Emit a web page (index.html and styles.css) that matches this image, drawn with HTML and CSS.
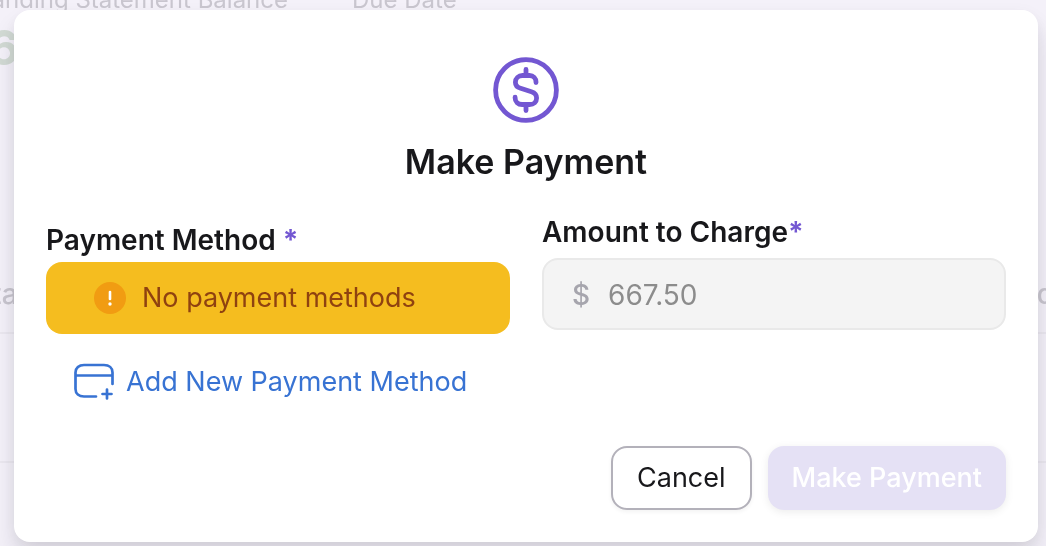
FILE: index.html
```html
<!DOCTYPE html>
<html lang="en">
<head>
<meta charset="utf-8">
<meta name="viewport" content="width=device-width, initial-scale=1">
<title>Make Payment</title>
<link rel="stylesheet" href="styles.css">
</head>
<body>
<div class="page" aria-hidden="true">
  <div class="summary">
    <div class="summary-item summary-item-balance">
      <div class="summary-label">anding Statement Balance</div>
      <div class="summary-value">6</div>
    </div>
    <div class="summary-item">
      <div class="summary-label">Due Date</div>
    </div>
  </div>
  <div class="list-head"><span>ta</span><span class="list-end">d</span></div>
  <div class="list-row"></div>
</div>
<main class="modal" role="dialog" aria-labelledby="title">
  <header class="modal-head">
    <svg class="head-icon" viewBox="0 0 66 66" fill="none" stroke="currentColor" stroke-width="4.8" stroke-linecap="round" stroke-linejoin="round" aria-hidden="true">
      <circle cx="33" cy="33" r="30.4"/>
      <path d="M33 12.500v6M33 47.500v6M43 25.500v-.5c0-3.700-2.700-6.500-6.500-6.500h-7c-4 0-7.100 2.900-7.100 6.700 0 3.300 1.900 5.100 5.200 6.100l10.800 3.400c3.400 1.100 5.200 3.200 5.200 6.200 0 3.900-2.900 6.600-7 6.600h-7.500c-4 0-7-2.700-7-6.800v-.5"/>
    </svg>
    <h1 class="title" id="title">Make Payment</h1>
  </header>
  <form class="form">
    <div class="fields">
      <section class="method" aria-labelledby="method-label">
        <div class="label label-method" id="method-label">Payment Method <span class="required">*</span></div>
        <div class="warning" role="status">
          <svg class="warning-icon" viewBox="0 0 32 32" aria-hidden="true">
            <circle cx="16" cy="16" r="16" fill="#f19c12"/>
            <path d="M16 10v7" stroke="#fff" stroke-width="2.600" stroke-linecap="round"/>
            <circle cx="16" cy="22" r="1.700" fill="#fff"/>
          </svg>
          <span>No payment methods</span>
        </div>
        <a class="add-link" href="#add">
          <svg class="add-icon" viewBox="0 0 42 38" fill="none" stroke="currentColor" stroke-width="2.700" stroke-linecap="round" stroke-linejoin="round" aria-hidden="true">
            <path d="M22 33.500H10c-5 0-8.500-3-8.500-7.500V9.500C1.500 5 5 2 10 2h20c5 0 8.500 3 8.500 7.500V21M1.500 12.500h37M33 26.500v9M28.500 31h9"/>
          </svg>
          <span>Add New Payment Method</span>
        </a>
      </section>
      <div class="amount">
        <label class="label" for="amount">Amount to Charge<span class="required">*</span></label>
        <div class="amount-box">
          <span class="currency">$</span>
          <input class="amount-input" id="amount" type="text" value="667.50" disabled>
        </div>
      </div>
    </div>
    <div class="actions">
      <button class="button cancel" type="button">Cancel</button>
      <button class="button submit" type="submit" disabled>Make Payment</button>
    </div>
  </form>
</main>
</body>
</html>
```
FILE: styles.css
```css
* {
  box-sizing: border-box;
}

body {
  margin: 0;
  min-height: 100vh;
  padding: 10px 8px 4px 14px;
  background: #f4f1f9;
  color: #18181b;
  font: 400 28px/40px Inter, sans-serif;
}

/* Dimmed account page behind the dialog */
.page {
  position: fixed;
  inset: 0;
  overflow: hidden;
  color: #c9c6cf;
}

.summary {
  display: flex;
  height: 268px;
}

.summary-item-balance {
  width: 352px;
}

.summary-label {
  margin-top: -16px;
  font-size: 24px;
  line-height: 32px;
  white-space: nowrap;
}

.summary-item-balance .summary-label {
  display: flex;
  justify-content: flex-end;
  padding-right: 64px;
}

.summary-value {
  margin: 8px 0 0 -12px;
  color: #d2dad4;
  font-size: 48px;
  font-weight: 700;
  line-height: 48px;
}

.list-head {
  display: flex;
  justify-content: space-between;
  height: 66px;
  padding-top: 6px;
  border-bottom: 2px solid #ebe8f0;
  font-weight: 500;
}

.list-head span {
  margin-left: -8px;
}

.list-head .list-end {
  margin-right: -8px;
}

.list-row {
  height: 129px;
  border-bottom: 2px solid #ebe8f0;
}

.modal {
  position: relative;
  padding: 47px 32px 32px;
  border-radius: 16px;
  background: #fff;
  box-shadow: 0 16px 24px rgba(24, 24, 40, 0.12), 0 4px 16px rgba(24, 24, 40, 0.05);
}

.modal-head {
  display: flex;
  flex-direction: column;
  align-items: center;
  gap: 15px;
}

.head-icon {
  width: 66px;
  height: 66px;
  color: #7357d2;
}

.title {
  margin: 0;
  font-size: 34px;
  font-weight: 600;
  line-height: 48px;
}

.form {
  display: flex;
  flex-direction: column;
  gap: 44px;
  margin-top: 26px;
}

.fields {
  display: grid;
  grid-template-columns: repeat(2, minmax(0, 1fr));
  gap: 32px;
}

.label {
  display: block;
  font-weight: 600;
}

.label-method {
  padding-top: 8px;
}

.required {
  color: #7357d2;
  font-weight: 700;
}

.warning {
  display: flex;
  align-items: center;
  gap: 16px;
  min-height: 72px;
  margin-top: 2px;
  padding: 0 48px;
  border-radius: 16px;
  background: #f5bd1f;
  color: #8f4210;
  font-size: 27px;
}

.warning-icon {
  flex: none;
  width: 32px;
  height: 32px;
}

.add-link {
  display: flex;
  align-items: center;
  gap: 10px;
  margin-top: 28px;
  padding-left: 28px;
  color: #3873d3;
  font-size: 27px;
  text-decoration: none;
}

.add-icon {
  flex: none;
  width: 42px;
  height: 38px;
}

.amount-box {
  display: flex;
  align-items: center;
  gap: 18px;
  height: 72px;
  margin-top: 6px;
  padding: 2px 28px 0;
  border: 2px solid #e9e9e9;
  border-radius: 16px;
  background: #f4f4f4;
}

.currency {
  color: #a6a5ad;
  font-weight: 500;
}

.amount-input {
  flex: 1;
  min-width: 0;
  padding: 0;
  border: 0;
  background: transparent;
  color: #8c8c8c;
  font: inherit;
}

.actions {
  display: flex;
  justify-content: flex-end;
  gap: 16px;
}

.button {
  height: 64px;
  padding: 0 24px;
  border: 0;
  border-radius: 16px;
  font: inherit;
  font-size: 27px;
}

.cancel {
  border: 2px solid #b3b1ba;
  background: #fff;
  color: #18181b;
  box-shadow: 0 2px 4px rgba(0, 0, 0, 0.05);
}

.submit {
  background: #e5e1f5;
  color: #fff;
  font-weight: 500;
  box-shadow: 0 2px 8px rgba(0, 0, 0, 0.08);
}
```
